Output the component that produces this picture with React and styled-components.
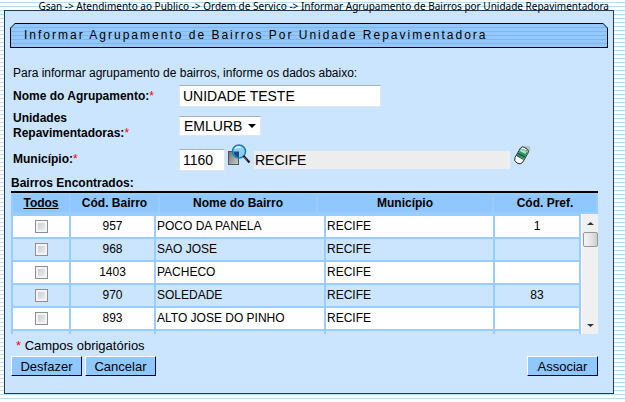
import React, { useState } from 'react';
import styled, { createGlobalStyle } from 'styled-components';

const GlobalStyle = createGlobalStyle`
  * {
    box-sizing: border-box;
  }

  body {
    margin: 0;
    font-family: 'Liberation Sans', Arial, sans-serif;
    font-size: 12px;
    line-height: 15px;
    color: #000;
    background: repeating-linear-gradient(to bottom, #fff 0 2px, #b9dcf0 2px 3px, #fff 3px 4px);
    overflow: hidden;
  }

  #root {
    min-height: 100vh;
  }
`;

const Page = styled.div`
  padding: 0 11px 8px 4px;
`;

const Breadcrumb = styled.nav`
  height: 10px;
  padding-right: 5px;
  font-family: 'Noto Sans', sans-serif;
  font-size: 10px;
  line-height: 12px;
  text-align: right;
  white-space: nowrap;
`;

const Panel = styled.main`
  padding: 12px 5px 17px;
  background: #cbe5ff;
  border: 1px solid #1c3c5c;
`;

const TitleBar = styled.div`
  height: 25px;
  padding: 1px;
  background: #000;
  clip-path: polygon(5px 0, calc(100% - 5px) 0, 100% 5px, 100% 100%, 0 100%, 0 5px);
`;

const Title = styled.h1`
  height: 23px;
  margin: 0;
  padding-left: 13px;
  font-size: 12px;
  font-weight: 400;
  line-height: 23px;
  letter-spacing: 2px;
  white-space: nowrap;
  background: repeating-linear-gradient(to bottom, #93c8fe 0 3px, #83b5e8 3px 4px);
  clip-path: polygon(4px 0, calc(100% - 4px) 0, 100% 4px, 100% 100%, 0 100%, 0 4px);
`;

const Content = styled.form`
  padding: 0 10px 0 1px;
`;

const Intro = styled.p`
  margin: 18px 0 1px 2px;
`;

const Field = styled.div`
  display: grid;
  grid-template-columns: 166px 1fr;
  align-items: center;
  min-height: ${(props) => props.$height}px;
  padding-left: 2px;
`;

const Label = styled.label`
  width: 150px;
  font-weight: 700;
`;

const Required = styled.span`
  color: #f00;
  font-weight: 400;
`;

const TextInput = styled.input`
  width: ${(props) => props.$width}px;
  height: 22px;
  padding: 0 3px;
  border: 1px solid #e2e6ea;
  border-top-color: #abadb3;
  font-family: inherit;
  font-size: 14px;
  background: #fff;
`;

const ReadOnlyInput = styled(TextInput)`
  flex: 1;
  min-width: 0;
  height: 18px;
  padding: 0 1px;
  border: none;
  background: #ededed;
`;

const SelectBox = styled.div`
  display: flex;
  align-items: center;
  width: 82px;
  height: 20px;
  background: #fff;
  border: 1px solid #e2e6ea;
  border-top-color: #abadb3;

  select {
    flex: 1;
    min-width: 0;
    padding: 0 0 0 4px;
    border: none;
    font-family: inherit;
    font-size: 14px;
    background: transparent;
    appearance: none;
  }

  svg {
    margin-right: 4px;
  }
`;

const CityRow = styled.div`
  display: flex;
  align-items: center;
  padding: 2px 63px 0 0;
`;

const IconButton = styled.button`
  display: flex;
  flex: none;
  margin: 0 3px 10px;
  padding: 0;
  border: none;
  background: none;
`;

const ListTitle = styled.h2`
  margin: 0;
  font-size: 12px;
  line-height: 15px;
`;

const Grid = styled.div`
  border-top: 2px solid #000;
`;

const Table = styled.table`
  width: 100%;
  table-layout: fixed;
  border-collapse: separate;
  border-spacing: 2px;
  background: #99ccff;
`;

const HeadTable = styled(Table)`
  th {
    height: 17px;
    padding: 0;
    background: #90c7fe;
    white-space: nowrap;
  }
`;

const BodyArea = styled.div`
  display: flex;
  height: 120px;
`;

const BodyScroll = styled.div`
  flex: 1;
  min-width: 0;
  overflow-y: auto;
  scrollbar-width: none;
`;

const Row = styled.tr`
  background: ${(props) => (props.$odd ? '#cbe5ff' : '#fff')};
`;

const Cell = styled.td`
  height: 21px;
  padding: 0 1px;
  text-align: ${(props) => (props.$center ? 'center' : 'left')};
  white-space: nowrap;
`;

const Check = styled.input`
  display: block;
  width: 13px;
  height: 13px;
  margin: 0 auto;
  border: 1px solid #8e8f8f;
  background: linear-gradient(135deg, #c0c5cb, #f6f6f6);
  box-shadow: inset 0 0 0 2px #f4f4f4;
  appearance: none;

  &:checked {
    background: #3c5a86;
  }
`;

const AllLink = styled.a`
  color: #000;
`;

const ScrollBar = styled.div`
  display: flex;
  flex-direction: column;
  align-items: center;
  width: 17px;
  padding: 8px 0 7px;
  background: #f0f0f0;
  border-left: 1px solid #fff;
`;

const Thumb = styled.div`
  width: 15px;
  height: 15px;
  margin: 7px 0 auto;
  border: 1px solid #979797;
  border-radius: 2px;
  background: linear-gradient(to right, #f4f4f4, #e6e6e6 50%, #cfcfcf);
`;

const Note = styled.p`
  margin: 4px 0 3px 5px;
  font-size: 13px;
`;

const Actions = styled.div`
  display: flex;
  gap: 3px;
`;

const Button = styled.button`
  height: 20px;
  width: 71px;
  margin-left: ${(props) => (props.$right ? 'auto' : '0')};
  padding: 0;
  border: 1px solid;
  border-color: #fff #00004a #00004a #fff;
  font-family: inherit;
  font-size: 13px;
  color: #000;
  background: #90c7ff;
`;

const bairros = [
  { codigo: 957, nome: 'POCO DA PANELA', pref: 1 },
  { codigo: 968, nome: 'SAO JOSE' },
  { codigo: 1403, nome: 'PACHECO' },
  { codigo: 970, nome: 'SOLEDADE', pref: 83 },
  { codigo: 893, nome: 'ALTO JOSE DO PINHO' },
];

function SearchIcon() {
  return (
    <svg width="23" height="22" viewBox="0 0 23 22">
      <defs>
        <linearGradient id="doc" x1="0" y1="0" x2="1" y2="1">
          <stop offset="0" stopColor="#6e6e6e" />
          <stop offset="1" stopColor="#d0d0d0" />
        </linearGradient>
      </defs>
      <rect x="0.5" y="7.5" width="10" height="13" fill="url(#doc)" stroke="#555" />
      <circle cx="11" cy="7.5" r="6.5" fill="#8fd0f2" stroke="#1c7db5" strokeWidth="1.5" />
      <path d="M5.500 7.500h5.500v5.500C8 13 5.500 11 5.500 7.500z" fill="#0b4f7d" />
      <path d="M7 5c1-2 4-3 6-1" stroke="#e6f8ff" strokeWidth="1.5" fill="none" />
      <path d="M15.5 12l6 6.500" stroke="#111" strokeWidth="2.2" />
      <path d="M16 13l3 3.500" stroke="#aaa" strokeWidth="0.7" />
    </svg>
  );
}

function EraserIcon() {
  return (
    <svg width="19" height="20" viewBox="0 0 19 20">
      <path d="M9 2.5L11 0.5L17 1.5L17.5 5L15 8z" fill="#b9bec2" />
      <path
        d="M7.5 3Q9 1 11.500 2.500L14.500 4.500Q16 6 15 8L9.500 17.500Q7.500 20 4 18Q0.500 16 2 12.500z"
        fill="#fff"
        stroke="#222"
      />
      <path d="M6.5 5.5L8 3.5L14.5 5.5L14.5 8L11 14L3.5 10.5z" fill="#2f9468" />
      <path d="M8 4l6 2-1.5 3-6-3z" fill="#a9dcc4" />
      <path d="M5 8.500l7 3.500M3.500 10.500l7 4" stroke="#0d3f2b" />
    </svg>
  );
}

function App() {
  const [nome, setNome] = useState('UNIDADE TESTE');
  const [municipio, setMunicipio] = useState('1160');
  const [selected, setSelected] = useState([]);

  const toggle = (codigo) => {
    setSelected((old) =>
      old.includes(codigo) ? old.filter((c) => c !== codigo) : [...old, codigo]
    );
  };

  const toggleAll = (e) => {
    e.preventDefault();
    setSelected(selected.length === bairros.length ? [] : bairros.map((b) => b.codigo));
  };

  return (
    <Page>
      <GlobalStyle />
      <Breadcrumb>
        Gsan -&gt; Atendimento ao Publico -&gt; Ordem de Servico -&gt; Informar Agrupamento de
        Bairros por Unidade Repavimentadora
      </Breadcrumb>
      <Panel>
        <TitleBar>
          <Title>Informar Agrupamento de Bairros Por Unidade Repavimentadora</Title>
        </TitleBar>
        <Content onSubmit={(e) => e.preventDefault()}>
          <Intro>Para informar agrupamento de bairros, informe os dados abaixo:</Intro>

          <Field $height={28}>
            <Label htmlFor="nome">
              Nome do Agrupamento:<Required>*</Required>
            </Label>
            <TextInput
              id="nome"
              $width={202}
              value={nome}
              onChange={(e) => setNome(e.target.value)}
            />
          </Field>

          <Field $height={32}>
            <Label htmlFor="unidade">
              Unidades Repavimentadoras:<Required>*</Required>
            </Label>
            <SelectBox>
              <select id="unidade" defaultValue="EMLURB">
                <option>EMLURB</option>
              </select>
              <svg width="8" height="4" viewBox="0 0 8 4">
                <path d="M0 0h8L4 4z" />
              </svg>
            </SelectBox>
          </Field>

          <Field $height={34}>
            <Label htmlFor="municipio">
              Município:<Required>*</Required>
            </Label>
            <CityRow>
              <TextInput
                id="municipio"
                $width={46}
                value={municipio}
                onChange={(e) => setMunicipio(e.target.value)}
              />
              <IconButton type="button" aria-label="Pesquisar">
                <SearchIcon />
              </IconButton>
              <ReadOnlyInput aria-label="Nome do município" value="RECIFE" readOnly />
              <IconButton type="button" aria-label="Limpar">
                <EraserIcon />
              </IconButton>
            </CityRow>
          </Field>

          <ListTitle>Bairros Encontrados:</ListTitle>
          <Grid>
            <HeadTable>
              <colgroup>
                <col width="56" />
                <col width="87" />
                <col />
                <col width="174" />
                <col width="102" />
              </colgroup>
              <thead>
                <tr>
                  <th>
                    <AllLink href="#todos" onClick={toggleAll}>
                      Todos
                    </AllLink>
                  </th>
                  <th>Cód. Bairro</th>
                  <th>Nome do Bairro</th>
                  <th>Município</th>
                  <th>Cód. Pref.</th>
                </tr>
              </thead>
            </HeadTable>
            <BodyArea>
              <BodyScroll>
                <Table>
                  <colgroup>
                    <col width="56" />
                    <col width="83" />
                    <col />
                    <col width="167" />
                    <col width="84" />
                  </colgroup>
                  <tbody>
                    {bairros.map((b, i) => (
                      <Row key={b.codigo} $odd={i % 2 === 1}>
                        <Cell $center>
                          <Check
                            type="checkbox"
                            aria-label={b.nome}
                            checked={selected.includes(b.codigo)}
                            onChange={() => toggle(b.codigo)}
                          />
                        </Cell>
                        <Cell $center>{b.codigo}</Cell>
                        <Cell>{b.nome}</Cell>
                        <Cell>RECIFE</Cell>
                        <Cell $center>{b.pref}</Cell>
                      </Row>
                    ))}
                    <Row $odd>
                      <Cell />
                      <Cell />
                      <Cell />
                      <Cell />
                      <Cell />
                    </Row>
                  </tbody>
                </Table>
              </BodyScroll>
              <ScrollBar>
                <svg width="7" height="3" viewBox="0 0 7 3">
                  <path d="M0 3h7L3.5 0z" fill="#333" />
                </svg>
                <Thumb />
                <svg width="7" height="3" viewBox="0 0 7 3">
                  <path d="M0 0h7L3.5 3z" fill="#333" />
                </svg>
              </ScrollBar>
            </BodyArea>
          </Grid>

          <Note>
            <Required>*</Required> Campos obrigatórios
          </Note>
          <Actions>
            <Button type="reset">Desfazer</Button>
            <Button type="button">Cancelar</Button>
            <Button type="submit" $right>
              Associar
            </Button>
          </Actions>
        </Content>
      </Panel>
    </Page>
  );
}

export default App;
